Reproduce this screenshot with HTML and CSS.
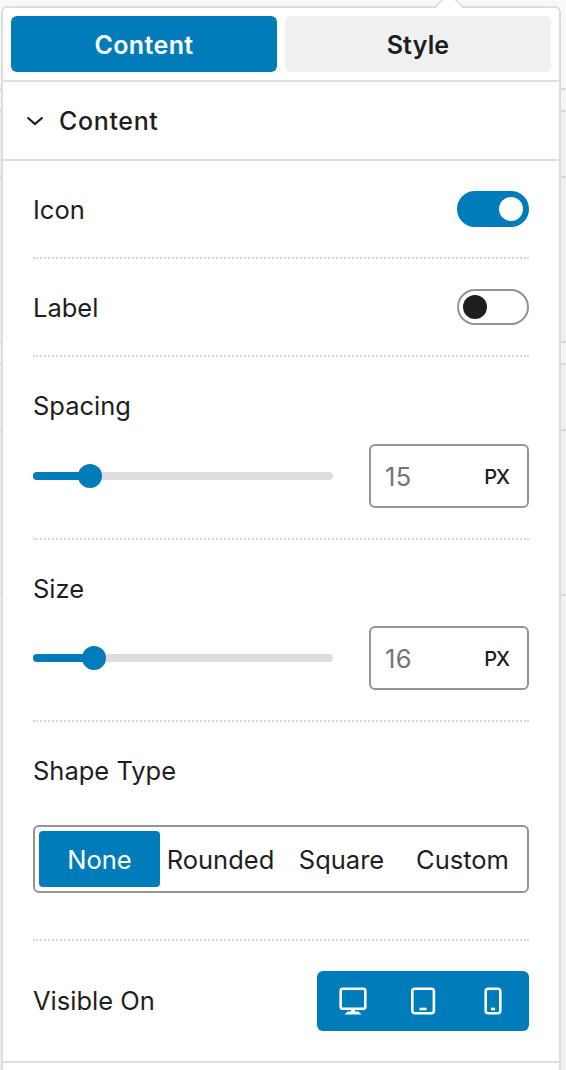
FILE: index.html
```html
<!DOCTYPE html>
<html lang="en">
<head>
<meta charset="utf-8">
<title>Content settings</title>
<link rel="stylesheet" href="styles.css">
</head>
<body>
<div class="backdrop"><i class="gap first"></i><i class="block"></i><i class="gap"></i><i class="cell"></i><i class="block"></i><i class="gap"></i><i class="cell"></i><i class="rest"></i></div>
<main class="popover">
  <svg class="arrow" width="30" height="9" viewBox="0 0 30 9"><path d="M1 9 9 0h12l8 9z" fill="#fff"/><path d="M0 7.200h1L8.500-.5M21.500-.5 29 7.200h1" fill="none" stroke="#ddd" stroke-width="1.600"/></svg>
  <nav class="tabs">
    <button class="tab active"><span>Content</span></button>
    <button class="tab"><span>Style</span></button>
  </nav>
  <header class="section">
    <svg width="18" height="12" viewBox="0 0 18 12"><path d="M1.500 2.500 9 9l7.500-6.500" fill="none" stroke="#1e1e1e" stroke-width="2.200"/></svg>
    <h2>Content</h2>
  </header>
  <section class="controls">
    <div class="row toggle-row"><label>Icon</label><span class="switch on"></span></div>
    <div class="row toggle-row"><label>Label</label><span class="switch"></span></div>
    <div class="row range-row">
      <label>Spacing</label>
      <div class="range"><div class="track"><span class="fill" style="width:57px"></span></div><div class="number"><span class="value">15</span><span class="unit">PX</span></div></div>
    </div>
    <div class="row range-row second">
      <label>Size</label>
      <div class="range"><div class="track"><span class="fill" style="width:61px"></span></div><div class="number"><span class="value">16</span><span class="unit">PX</span></div></div>
    </div>
    <div class="row shape-row">
      <label>Shape Type</label>
      <div class="segments"><span class="seg selected">None</span><span class="seg">Rounded</span><span class="seg">Square</span><span class="seg">Custom</span></div>
    </div>
    <div class="row visible-row">
      <label>Visible On</label>
      <div class="devices">
        <svg width="28" height="28" viewBox="0 0 28 28"><rect x="1.700" y="1.700" width="24.600" height="20" rx="2" fill="none" stroke="#fff" stroke-width="2.600"/><path d="M12 22h4v2.500h3.500l3 2.900h-17l3-2.900H12z" fill="#fff"/></svg>
        <svg width="28" height="28" viewBox="0 0 28 28"><rect x="3.300" y="1.700" width="21.600" height="24.600" rx="2.500" fill="none" stroke="#fff" stroke-width="2.600"/><path d="M10.500 20.700h7v2.600h-7z" fill="#fff"/></svg>
        <svg width="28" height="28" viewBox="0 0 28 28"><rect x="6.700" y="1.700" width="14.600" height="24.600" rx="2.500" fill="none" stroke="#fff" stroke-width="2.600"/><path d="M12 20.700h4v2.600h-4z" fill="#fff"/></svg>
      </div>
    </div>
  </section>
</main>
</body>
</html>
```
FILE: styles.css
```css
* { box-sizing: border-box; }
body { margin: 0; width: 566px; height: 1070px; overflow: hidden; position: relative; background: #f9f9f9; font-family: Inter, "Liberation Sans", sans-serif; font-size: 25.5px; line-height: 32px; color: #1e1e1e; }
.backdrop { position: absolute; inset: 0; display: flex; flex-direction: column; }
.backdrop i { display: block; flex: none; border-bottom: 2px solid #ddd; }
.backdrop .block { height: 22px; background: #f7f7f7; }
.backdrop .gap { height: 66px; background: #f3f3f3; }
.backdrop .gap.first { height: 90px; background: #fafafa; }
.backdrop .cell { height: 165px; background: #f3f3f3; }
.backdrop .rest { flex: 1; border: 0; background: #f5f5f5; }
.popover { position: relative; width: 560px; height: 1080px; margin: 6px 0 0 1px; border: 2px solid #ddd; border-radius: 6px; background: #fff; box-shadow: 0 2px 14px rgba(0, 0, 0, .04); }
.arrow { position: absolute; left: 431px; top: -8px; }
.tabs { display: flex; gap: 8px; height: 74px; padding: 8px; border-bottom: 2px solid #e0e0e0; }
.tab { flex: 1; height: 56px; padding: 2px 0 0; border: 0; border-radius: 6px; background: #f0f0f0; color: #1e1e1e; font: 600 25px/32px Inter, "Liberation Sans", sans-serif; letter-spacing: .2px; }
.tab.active { background: #007cba; color: #fff; letter-spacing: .4px; }
.section { display: flex; align-items: center; gap: 15px; height: 79px; padding-left: 23px; border-bottom: 2px solid #e0e0e0; }
h2 { margin: 0; font-size: 25px; font-weight: 500; line-height: 32px; letter-spacing: .65px; }
.controls { display: flex; flex-direction: column; height: 902px; padding: 0 30px; border-bottom: 2px solid #e0e0e0; }
.row { flex: none; border-bottom: 2px dotted #d8d8d8; }
.toggle-row { display: flex; align-items: center; justify-content: space-between; height: 98px; }
.toggle-row label { padding-top: 2px; }
.switch { display: flex; align-items: center; width: 72px; height: 36px; padding: 0 4px; border: 2px solid #949494; border-radius: 18px; }
.switch::before { content: ""; width: 24px; height: 24px; border-radius: 50%; background: #1e1e1e; }
.switch.on { justify-content: flex-end; border-color: #007cba; background: #007cba; }
.switch.on::before { background: #fff; }
.range-row { height: 183px; padding-top: 33px; }
.range-row.second { height: 182px; }
label { display: block; width: max-content; white-space: nowrap; }
.range { display: flex; align-items: center; justify-content: space-between; margin-top: 22px; }
.second .range { margin-top: 21px; }
.track { width: 300px; height: 8px; border-radius: 4px; background: #ddd; }
.fill { display: flex; align-items: center; justify-content: flex-end; height: 8px; border-radius: 4px; background: #007cba; }
.fill::after { content: ""; flex: none; width: 24px; height: 24px; margin-right: -12px; border-radius: 50%; background: #007cba; }
.number { display: flex; align-items: center; justify-content: space-between; width: 160px; height: 64px; padding: 2px 18px 0 14px; border: 2px solid #949494; border-radius: 6px; }
.value { color: #757575; letter-spacing: .4px; }
.unit { padding-bottom: 1px; font-size: 20px; font-weight: 500; line-height: 28px; letter-spacing: -1px; }
.shape-row { height: 219px; padding-top: 33px; }
.segments { display: flex; height: 68px; margin-top: 38px; padding: 4px; border: 2px solid #949494; border-radius: 6px; }
.seg { flex: 1; min-width: 0; display: flex; align-items: center; justify-content: center; padding-top: 2px; border-radius: 4px; white-space: nowrap; }
.selected { background: #007cba; color: #fff; }
.visible-row { display: flex; align-items: center; justify-content: space-between; height: 120px; border: 0; }
.devices { display: flex; align-items: center; justify-content: space-between; width: 212px; height: 60px; padding: 0 22px; border-radius: 6px; background: #007cba; }
```
